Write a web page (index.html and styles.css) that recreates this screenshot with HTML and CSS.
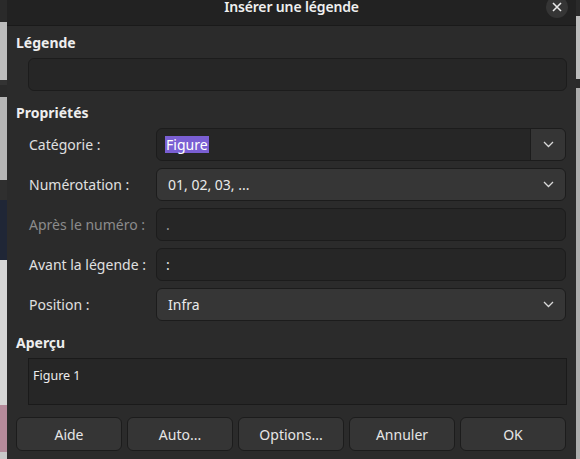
FILE: index.html
```html
<!DOCTYPE html>
<html lang="fr">
<head>
<meta charset="utf-8">
<title>Insérer une légende</title>
<link rel="stylesheet" href="styles.css">
</head>
<body>
<div class="desk desk-left">
  <div class="b b1"></div>
  <div class="b b2"></div>
  <div class="b b3"></div>
  <div class="b b4"></div>
  <div class="b b5"></div>
  <div class="b b6"></div>
  <div class="b b7"></div>
  <div class="b b8"></div>
  <div class="b b9"></div>
</div>
<div class="dialog">
  <header class="titlebar">
    <span></span>
    <h1 class="title">Insérer une légende</h1>
    <button class="close" aria-label="Fermer">
      <svg width="10" height="10" viewBox="0 0 10 10"><path d="M1 1 L9 9 M9 1 L1 9" stroke="#e8e8e8" stroke-width="1.6" fill="none"/></svg>
    </button>
  </header>
  <main class="content">
    <h2 class="section sec-legende">Légende</h2>
    <div class="indent">
      <div class="entry entry-wide"></div>
    </div>
    <h2 class="section sec-props">Propriétés</h2>
    <div class="form">
      <label class="lbl">Catégorie :</label>
      <div class="combo-entry">
        <div class="ce-text"><span class="sel">Figure</span></div>
        <div class="ce-btn"><svg class="chev" width="11" height="7" viewBox="0 0 11 7"><path d="M1 1 L5.5 5.5 L10 1" stroke="#d8d8d8" stroke-width="1.3" fill="none"/></svg></div>
      </div>
      <label class="lbl">Numérotation :</label>
      <div class="combo"><span>01, 02, 03, ...</span><svg class="chev" width="11" height="7" viewBox="0 0 11 7"><path d="M1 1 L5.5 5.5 L10 1" stroke="#d8d8d8" stroke-width="1.3" fill="none"/></svg></div>
      <label class="lbl disabled">Après le numéro :</label>
      <div class="entry dis-entry"><span>.</span></div>
      <label class="lbl">Avant la légende :</label>
      <div class="entry"><span>:</span></div>
      <label class="lbl">Position :</label>
      <div class="combo"><span>Infra</span><svg class="chev" width="11" height="7" viewBox="0 0 11 7"><path d="M1 1 L5.5 5.5 L10 1" stroke="#d8d8d8" stroke-width="1.3" fill="none"/></svg></div>
    </div>
    <h2 class="section sec-apercu">Aperçu</h2>
    <div class="indent">
      <div class="preview">Figure 1</div>
    </div>
    <div class="buttons">
      <button class="btn">Aide</button>
      <button class="btn">Auto...</button>
      <button class="btn">Options...</button>
      <button class="btn">Annuler</button>
      <button class="btn">OK</button>
    </div>
  </main>
</div>
<div class="desk desk-right">
  <div class="b r1"></div>
  <div class="b r2"></div>
  <div class="b r3"></div>
  <div class="b r4"></div>
</div>
</body>
</html>
```

FILE: styles.css
```css
* { box-sizing: border-box; }
html, body { margin: 0; padding: 0; }
body {
  width: 580px;
  height: 459px;
  overflow: hidden;
  display: flex;
  background: #2b2b2b;
  font-family: "Noto Sans", "Open Sans", sans-serif;
  color: #e6e6e6;
}
.desk { display: flex; flex-direction: column; flex: none; }
.desk-left { width: 7px; }
.desk-right { width: 4px; }
.b { flex: none; }
.b1 { height: 22px; background: #2a2a2a; }
.b2 { height: 58px; background: #bdbdbd; }
.b3 { height: 17px; background: #2a2a2a; border-top: 5px solid #333; }
.b4 { height: 83px; background: #b6b6b6; }
.b5 { height: 20px; background: #2f2f2f; }
.b6 { height: 60px; background: #1f2636; }
.b7 { height: 145px; background: #d6d6d6; }
.b8 { height: 47px; background: #b58a9a; }
.b9 { flex: 1; background: #c8c8c8; }
.r1 { height: 16px; background: #2a2a2a; }
.r2 { height: 63px; background: #bdbdbd; }
.r3 { height: 9px; background: #2a2a2a; }
.r4 { flex: 1; background: #adadad; }

.dialog {
  width: 569px;
  flex: none;
  display: flex;
  flex-direction: column;
  background: #2b2b2b;
}
.titlebar {
  height: 26px;
  flex: none;
  display: grid;
  grid-template-columns: 1fr auto 1fr;
  align-items: start;
  background: #222222;
  border-bottom: 1px solid #1a1a1a;
}
.title {
  margin: 0;
  padding-top: 0;
  font-size: 14px;
  font-weight: 600;
  letter-spacing: -0.15px;
  line-height: 14px;
  color: #f0f0f0;
}
.close {
  justify-self: end;
  margin: -4px 8px 0 0;
  width: 22px;
  height: 22px;
  border-radius: 50%;
  border: none;
  padding: 0;
  background: #353535;
  display: flex;
  align-items: center;
  justify-content: center;
}
.content {
  padding: 0 10px 0 9px;
  display: flex;
  flex-direction: column;
}
.section {
  margin: 0;
  font-size: 14px;
  font-weight: 700;
  line-height: 18px;
  color: #eeeeee;
}
.sec-legende { margin-top: 8px; }
.sec-props { margin-top: 13px; }
.sec-apercu { margin-top: 13px; }
.indent { padding-left: 12px; margin-top: 6px; }
.entry {
  height: 33px;
  border: 1px solid #1c1c1c;
  border-radius: 6px;
  background: #262626;
  display: flex;
  align-items: center;
  padding-left: 9px;
  font-size: 14px;
}
.entry-wide { width: 539px; }
.form {
  margin-top: 6px;
  display: grid;
  grid-template-columns: 140px 1fr;
  row-gap: 7px;
  align-items: center;
}
.lbl {
  padding-left: 13px;
  font-size: 14px;
  color: #e0e0e0;
}
.lbl.disabled { color: #8c8c8c; }
.dis-entry { color: #9a9a9a; }
.combo-entry {
  height: 33px;
  display: flex;
  border: 1px solid #1c1c1c;
  border-radius: 6px;
  background: #262626;
  overflow: hidden;
}
.ce-text {
  flex: 1;
  display: flex;
  align-items: center;
  padding-left: 8px;
  font-size: 14px;
}
.sel { background: #7a5fd3; color: #ffffff; padding: 0 1px; line-height: 17px; }
.ce-btn {
  width: 35px;
  background: #353535;
  border-left: 1px solid #1c1c1c;
  display: flex;
  align-items: center;
  justify-content: center;
}
.combo {
  height: 33px;
  display: flex;
  align-items: center;
  justify-content: space-between;
  border: 1px solid #1c1c1c;
  border-radius: 6px;
  background: #363636;
  padding: 0 11px 0 11px;
  font-size: 14px;
  color: #eaeaea;
}
.preview {
  width: 539px;
  height: 47px;
  border: 1px solid #1a1a1a;
  background: #262626;
  padding: 8px 0 0 4px;
  font-size: 12.5px;
  color: #ececec;
}
.buttons {
  margin-top: 12px;
  display: grid;
  grid-template-columns: repeat(5, 1fr);
  column-gap: 5px;
}
.btn {
  height: 34px;
  border: 1px solid #1c1c1c;
  border-radius: 6px;
  background: #353535;
  color: #e6e6e6;
  font-family: "Noto Sans", "Open Sans", sans-serif;
  font-size: 14px;
  padding: 0;
}
```
